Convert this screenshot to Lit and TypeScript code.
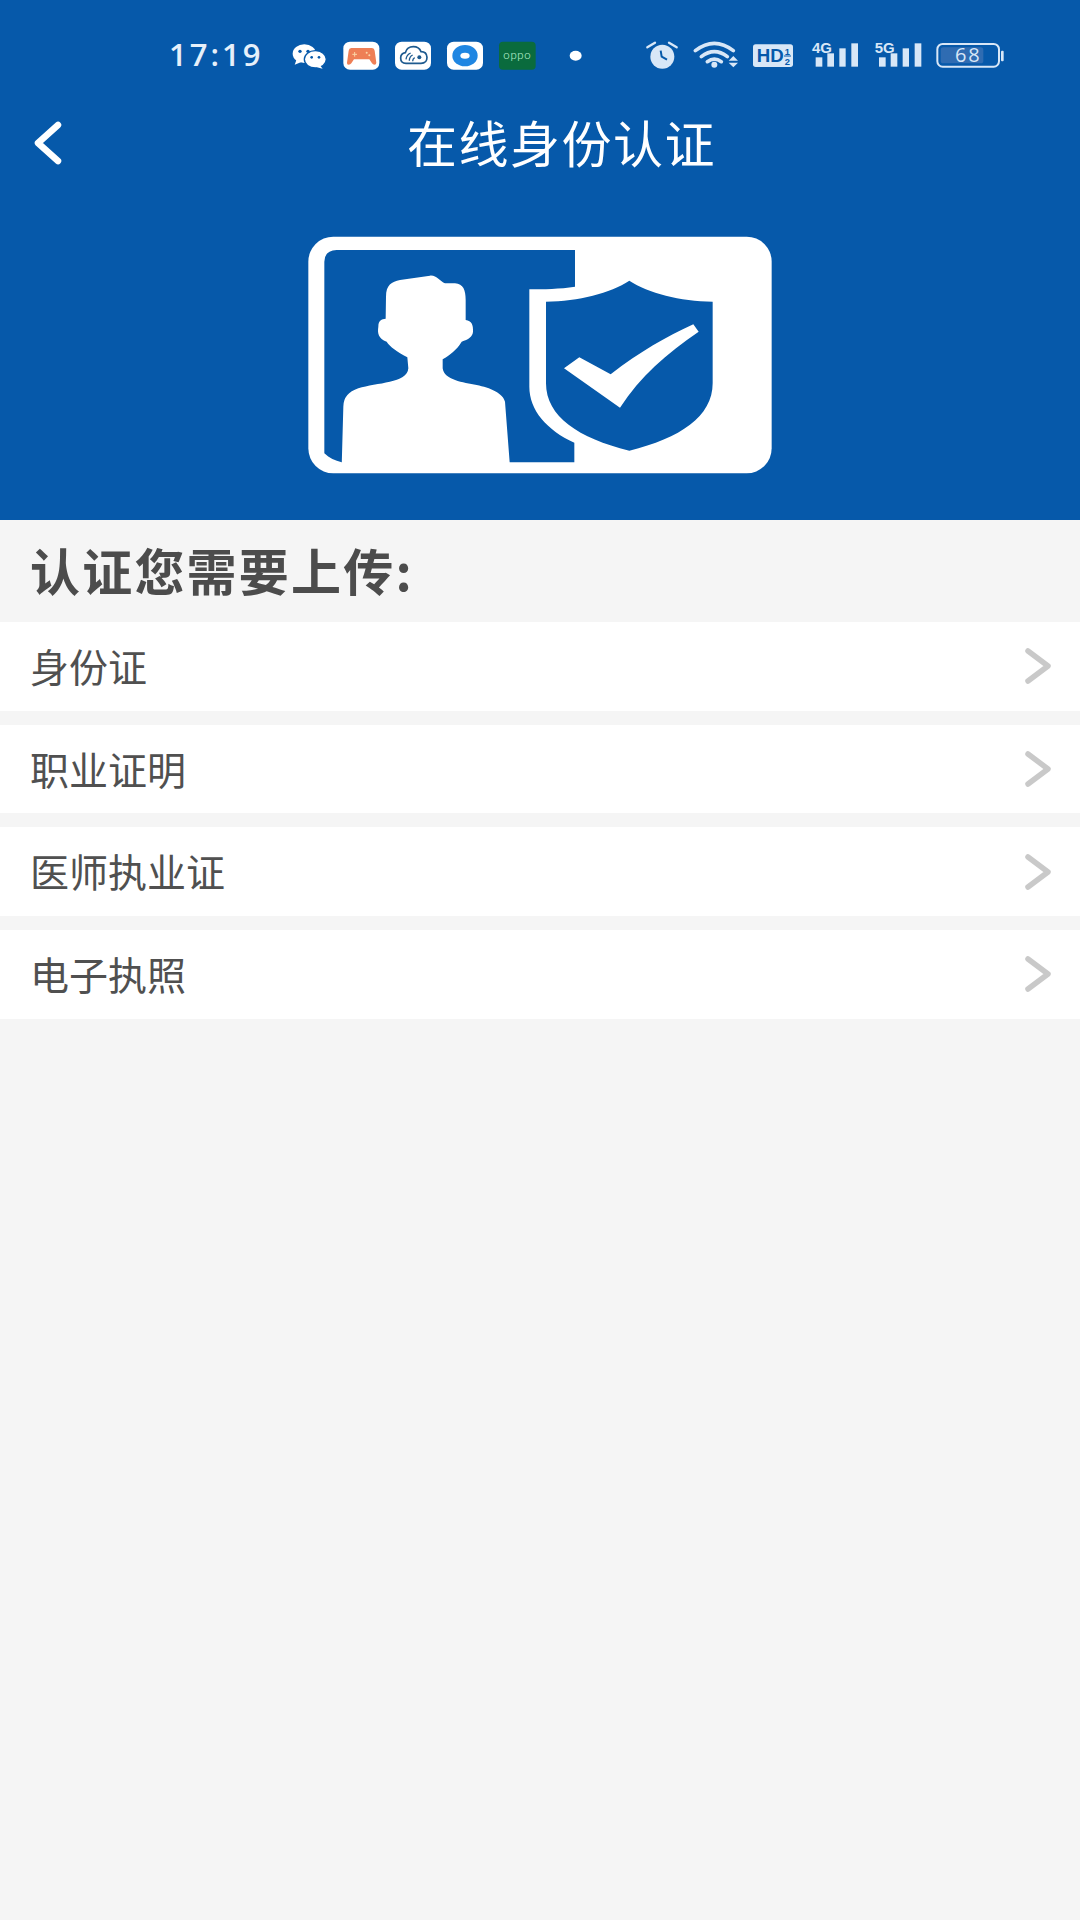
import { LitElement, html, css, svg } from "lit";
import { customElement } from "lit/decorators.js";

const ROWS = ["身份证", "职业证明", "医师执业证", "电子执照"];
const LIGHT = "#d8e7f7";

const bars = (x: number) => svg`
  <rect x="${x}" y="112" width="20" height="28" fill="${LIGHT}"/>
  <rect x="${x + 35}" y="100" width="20" height="40" fill="${LIGHT}"/>
  <rect x="${x + 71}" y="85" width="19" height="55" fill="${LIGHT}"/>
  <rect x="${x + 107}" y="70" width="20" height="70" fill="${LIGHT}"/>`;

@customElement("app-root")
export class AppRoot extends LitElement {
  static styles = css`
    :host {
      display: block;
      width: 1080px;
      height: 1920px;
      background: #f5f5f5;
      font-family: "Noto Sans CJK SC", "Noto Sans", sans-serif;
    }
    .top {
      background: #0659aa;
      height: 520px;
      display: flex;
      flex-direction: column;
      align-items: stretch;
    }
    .status {
      height: 110px;
      display: flex;
      align-items: center;
      padding-left: 169px;
    }
    .time {
      width: 111px;
      padding-bottom: 2px;
      font: 600 31px "Open Sans", sans-serif;
      letter-spacing: 3px;
      color: #e6f0fa;
    }
    .status svg { display: block; height: 70px; }
    .left-icons { width: 320px; margin-right: 20px; }
    .right-icons { width: 400px; }
    .nav {
      height: 66px;
      display: flex;
      align-items: center;
      padding-left: 32px;
    }
    .nav svg { display: block; width: 36px; height: 46px; }
    .title {
      margin-left: 339px;
      padding-bottom: 3px;
      font-size: 50px;
      font-weight: 400;
      letter-spacing: 1.5px;
      color: #fff;
      line-height: 59px;
      white-space: nowrap;
    }
    .logo {
      display: block;
      width: 500px;
      height: 260px;
      margin: 44px auto 0;
    }
    .heading {
      height: 102px;
      display: flex;
      align-items: center;
      padding: 0 0 4px 30px;
      box-sizing: border-box;
      font-size: 50px;
      font-weight: 700;
      letter-spacing: 2.2px;
      color: #4c4c4c;
      white-space: nowrap;
    }
    .list {
      display: flex;
      flex-direction: column;
      gap: 14px;
    }
    .row {
      height: 88.7px;
      background: #fff;
      display: flex;
      align-items: center;
      justify-content: space-between;
      padding: 0 27px 0 30px;
      font-size: 39px;
      color: #505050;
    }
    .row span { padding-bottom: 3px; }
    .row svg { display: block; width: 30px; height: 40px; }
  `;

  render() {
    return html`
      <div class="top">
        <div class="status">
          <span class="time">17:19</span>
          <svg class="left-icons" viewBox="390 0 960 210">
            <ellipse cx="463" cy="101" rx="35" ry="28" fill="#fff"/>
            <path d="M440 118l-6 16 22-9z" fill="#fff"/>
            <circle cx="450" cy="94" r="5" fill="#0659aa"/>
            <circle cx="474" cy="94" r="5" fill="#0659aa"/>
            <ellipse cx="496" cy="118" rx="33" ry="26" fill="#fff" stroke="#0659aa" stroke-width="4"/>
            <path d="M510 136l8 10-20-5z" fill="#fff"/>
            <circle cx="485" cy="112" r="4" fill="#0659aa"/>
            <circle cx="507" cy="112" r="4" fill="#0659aa"/>

            <rect x="580" y="65" width="108" height="84" rx="20" fill="#fff"/>
            <path d="M604 84h62q7 0 8 8l5 36q0 6-6 6-4 0-7-4l-8-12h-46l-8 12q-3 4-8 4-6 0-5-6l5-36q1-8 8-8z" fill="#ee7f56"/>
            <path d="M607 103h14M614 96v14" stroke="#fbd7a8" stroke-width="3"/>
            <circle cx="650" cy="98" r="3" fill="#fbd7a8"/><circle cx="658" cy="106" r="3" fill="#fbd7a8"/>

            <rect x="735" y="65" width="108" height="84" rx="20" fill="#fff"/>
            <path d="M768 130q-16 0-16-16 0-14 14-16 5-18 24-18 17 0 23 15 17 0 18 17 0 18-18 18z" fill="none" stroke="#1d5a8f" stroke-width="5"/>
            <path d="M768 118q2-14 14-19M778 122q0-12 10-17M788 124q0-8 6-11" fill="none" stroke="#1d5a8f" stroke-width="4"/>
            <circle cx="808" cy="112" r="6" fill="#1d5a8f"/>

            <rect x="891" y="65" width="108" height="84" rx="20" fill="#fff"/>
            <ellipse cx="945" cy="107" rx="38" ry="32" fill="#1f86e2"/>
            <ellipse cx="945" cy="107" rx="14" ry="9" fill="#fff"/>

            <rect x="1047" y="65" width="110" height="84" rx="12" fill="#0a6b3d"/>
            <text x="1102" y="116" text-anchor="middle" font-family="Roboto, sans-serif" font-size="34" font-weight="300" letter-spacing="2" fill="#b4efcb">oppo</text>

            <ellipse cx="1277" cy="107" rx="18" ry="15" fill="#fff"/>
          </svg>
          <svg class="right-icons" viewBox="0 0 1200 210">
            <circle cx="127" cy="110" r="36" fill="${LIGHT}"/>
            <path d="M122 92l3 18 16 9" fill="none" stroke="#0659aa" stroke-width="6"/>
            <path d="M82 82l23-14M147 68l23 14" stroke="${LIGHT}" stroke-width="7" stroke-linecap="round"/>

            <path d="M226 92q57-44 114 0M244 110q39-30 78 0M262 125q21-15 42 0" fill="none" stroke="${LIGHT}" stroke-width="11" stroke-linecap="round"/>
            <circle cx="283" cy="134" r="9" fill="${LIGHT}"/>
            <path d="M340 108l14 14h-28zM340 142l14-14h-28z" fill="${LIGHT}"/>

            <rect x="399" y="73" width="120" height="68" rx="8" fill="${LIGHT}"/>
            <text x="410" y="127" font-family="'Liberation Sans', sans-serif" font-size="56" font-weight="700" fill="#0659aa">HD</text>
            <text x="502" y="104" font-family="'Liberation Sans', sans-serif" font-size="28" font-weight="700" fill="#0659aa" text-anchor="middle">1</text>
            <text x="502" y="135" font-family="'Liberation Sans', sans-serif" font-size="28" font-weight="700" fill="#0659aa" text-anchor="middle">2</text>
            <path d="M492 108h21" stroke="#0659aa" stroke-width="3"/>

            <text x="576" y="98" font-family="'Liberation Sans', sans-serif" font-size="45" font-weight="700" fill="${LIGHT}">4G</text>
            ${bars(587)}
            <text x="764" y="98" font-family="'Liberation Sans', sans-serif" font-size="45" font-weight="700" fill="${LIGHT}">5G</text>
            ${bars(777)}

            <rect x="952" y="72" width="185" height="68" rx="16" fill="none" stroke="${LIGHT}" stroke-width="6"/>
            <rect x="962" y="82" width="128" height="48" rx="8" fill="#2f6cb2"/>
            <text x="1045" y="127" text-anchor="middle" font-family="'Open Sans', sans-serif" font-size="60" letter-spacing="6" fill="${LIGHT}">68</text>
            <rect x="1143" y="92" width="8" height="32" rx="3" fill="${LIGHT}"/>
          </svg>
        </div>
        <div class="nav">
          <svg viewBox="0 0 36 46">
            <path d="M26 5L6 23l20 18" fill="none" stroke="#fff" stroke-width="6.5" stroke-linecap="round" stroke-linejoin="round"/>
          </svg>
          <span class="title">在线身份认证</span>
        </div>
        <svg class="logo" viewBox="0 0 1500 780">
          <rect x="55" y="50" width="1390" height="710" rx="75" fill="#fff"/>
          <path d="M140 90H855V200C810 207 760 208 718 208V500C718 570 770 630 853 668V727H155C135 722 118 714 103 700V125Q103 92 140 90Z" fill="#0659aa"/>
          <path d="M155 740L160 560Q160 520 205 505C260 488 352 490 355 445L352 412C320 395 300 380 290 365C265 355 262 340 265 320C265 300 275 298 287 296L288 230C288 195 305 185 330 180L420 167C440 165 450 185 465 190L495 190C520 192 527 210 527 240L527 300C545 302 550 315 549 335C548 350 535 358 515 365C500 390 480 405 458 418L458 445C462 480 520 488 560 495C600 503 640 520 645 545L660 740Z" fill="#fff"/>
          <path d="M1018 182C1075 220 1170 243 1268 245V490C1268 590 1170 655 1018 692C866 655 768 590 768 490V245C866 243 961 220 1018 182Z" fill="#0659aa"/>
          <path d="M822 445L868 412L962 463C1050 395 1130 350 1210 313L1226 335C1130 400 1050 470 990 563Z" fill="#fff"/>
        </svg>
      </div>
      <div class="heading">认证您需要上传:</div>
      <div class="list">
        ${ROWS.map(
          (r) => html`<div class="row">
            <span>${r}</span>
            <svg viewBox="0 0 30 40">
              <path d="M5 5L25 20 5 35" fill="none" stroke="#c9c9c9" stroke-width="5.5" stroke-linecap="round" stroke-linejoin="round"/>
            </svg>
          </div>`
        )}
      </div>
    `;
  }
}
